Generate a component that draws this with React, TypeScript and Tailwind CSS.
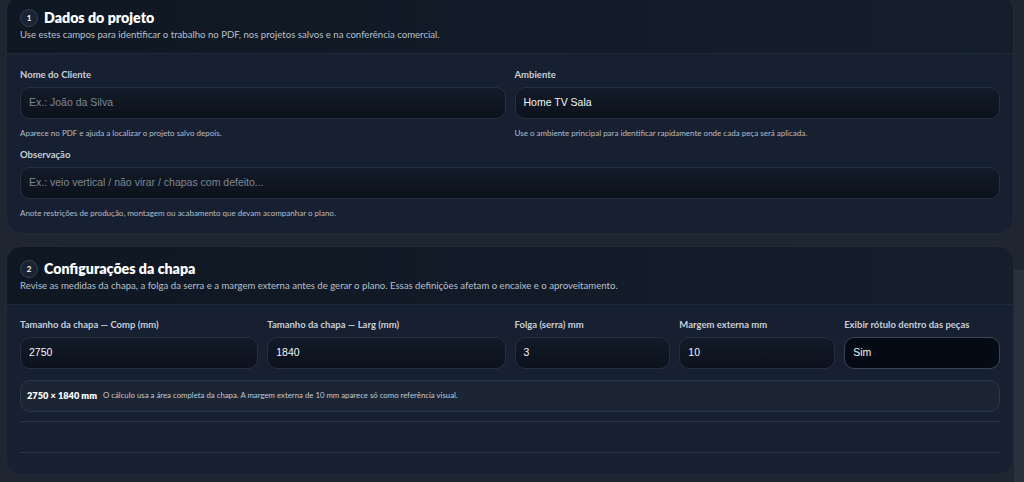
import type { ReactNode } from "react";

const ui = { fontFamily: 'Lato, "Noto Sans", sans-serif' };
const field = { fontFamily: '"Liberation Sans", Arial, sans-serif' };

function Badge({ n }: { n: number }) {
  return (
    <span
      className="flex h-[18px] w-[18px] items-center justify-center rounded-full border border-[#354254] bg-[#1a2331] text-[8px] font-bold text-white"
      style={ui}
    >
      {n}
    </span>
  );
}

function Card({
  n,
  title,
  subtitle,
  children,
  className,
}: {
  n: number;
  title: string;
  subtitle: string;
  children: ReactNode;
  className?: string;
}) {
  return (
    <section
      className={`overflow-hidden rounded-2xl border border-[#1f2937] bg-[#172030] ${className ?? ""}`}
    >
      <header className="border-b border-[#202b3a] bg-gradient-to-r from-[#0f1723] to-[#151e2b] px-[13px] pb-[12px] pt-[12px]">
        <div className="flex h-5 items-center gap-[6px]">
          <Badge n={n} />
          <h2 className="text-[14.2px] font-extrabold leading-5 text-white" style={ui}>
            {title}
          </h2>
        </div>
        <p className="mt-px text-[9.6px] leading-3 text-[#b7c0cc]" style={ui}>
          {subtitle}
        </p>
      </header>
      {children}
    </section>
  );
}

function Label({ children }: { children: ReactNode }) {
  return (
    <label className="mb-[5px] block text-[9.5px] font-bold leading-[14px] text-[#c7cfda]" style={ui}>
      {children}
    </label>
  );
}

function Input({
  value,
  placeholder,
  dark,
}: {
  value?: string;
  placeholder?: string;
  dark?: boolean;
}) {
  return (
    <div
      className={`flex h-8 items-center rounded-[10px] border px-[8px] text-[10.5px] ${
        dark
          ? "border-[#3a4556] bg-[#050b14]"
          : "border-[#243041] bg-gradient-to-b from-[#121b28] to-[#0c121c]"
      }`}
      style={field}
    >
      {value ? (
        <span className="font-medium text-[#f1f4f8]">{value}</span>
      ) : (
        <span className="text-[#7d8796]">{placeholder}</span>
      )}
    </div>
  );
}

function Help({ children }: { children: ReactNode }) {
  return (
    <p className="mt-2 text-[8px] leading-3 text-[#b6bec9]" style={ui}>
      {children}
    </p>
  );
}

export default function App() {
  return (
    <div className="flex h-[482px] w-[1024px] overflow-hidden bg-[#1f2631]">
      <main className="flex w-[1014px] flex-col gap-[12px] pl-[6px]">
        <Card
          n={1}
          title="Dados do projeto"
          subtitle="Use estes campos para identificar o trabalho no PDF, nos projetos salvos e na conferência comercial."
          className="-mt-[5px]"
        >
          <div className="px-[13px] pb-[14px] pt-[14px]">
            <div className="grid grid-cols-2 gap-[9px]">
              <div>
                <Label>Nome do Cliente</Label>
                <Input placeholder="Ex.: João da Silva" />
                <Help>Aparece no PDF e ajuda a localizar o projeto salvo depois.</Help>
              </div>
              <div>
                <Label>Ambiente</Label>
                <Input value="Home TV Sala" />
                <Help>Use o ambiente principal para identificar rapidamente onde cada peça será aplicada.</Help>
              </div>
            </div>
            <div className="mt-[9px]">
              <Label>Observação</Label>
              <Input placeholder="Ex.: veio vertical / não virar / chapas com defeito..." />
              <Help>Anote restrições de produção, montagem ou acabamento que devam acompanhar o plano.</Help>
            </div>
          </div>
        </Card>

        <Card
          n={2}
          title="Configurações da chapa"
          subtitle="Revise as medidas da chapa, a folga da serra e a margem externa antes de gerar o plano. Essas definições afetam o encaixe e o aproveitamento."
        >
          <div className="px-[13px] pb-[21px] pt-[13px]">
            <div className="grid grid-cols-2 gap-[9px]">
              <div className="grid grid-cols-2 gap-[9px]">
                <div>
                  <Label>Tamanho da chapa — Comp (mm)</Label>
                  <Input value="2750" />
                </div>
                <div>
                  <Label>Tamanho da chapa — Larg (mm)</Label>
                  <Input value="1840" />
                </div>
              </div>
              <div className="grid grid-cols-3 gap-[9px]">
                <div>
                  <Label>Folga (serra) mm</Label>
                  <Input value="3" />
                </div>
                <div>
                  <Label>Margem externa mm</Label>
                  <Input value="10" />
                </div>
                <div>
                  <Label>Exibir rótulo dentro das peças</Label>
                  <Input value="Sim" dark />
                </div>
              </div>
            </div>

            <div className="mt-[11px] flex h-8 items-center gap-[6px] rounded-[10px] border border-[#2b3646] bg-[#1c2534] px-[6px]">
              <span className="text-[9.2px] font-extrabold text-white" style={ui}>
                2750 × 1840 mm
              </span>
              <span className="text-[7.8px] text-[#c0c8d3]" style={ui}>
                O cálculo usa a área completa da chapa. A margem externa de 10 mm aparece só como referência visual.
              </span>
            </div>

            <div className="mt-[9px] h-[31px] border-t border-[#2a3444]" />
            <div className="border-t border-[#2a3444]" />
          </div>
        </Card>
      </main>
      <aside className="flex w-[10px] flex-col">
        <div className="h-[270px]" />
        <div className="flex-1 bg-[#29313d]" />
      </aside>
    </div>
  );
}
